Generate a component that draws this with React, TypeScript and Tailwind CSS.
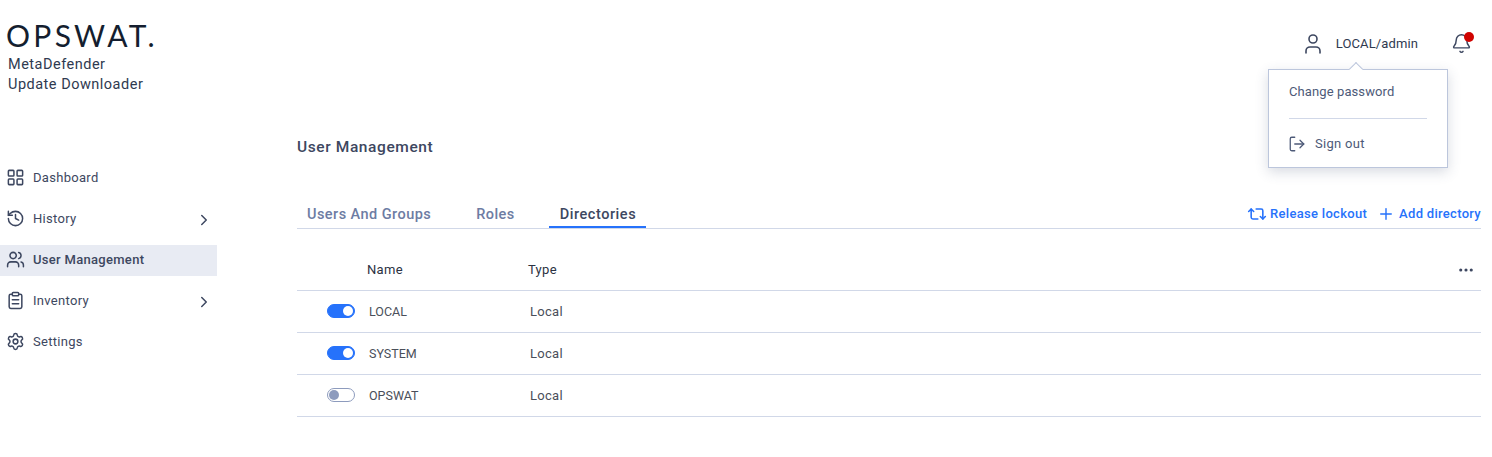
import React from 'react';
import {
  Bell,
  ChevronRight,
  Ellipsis,
  History,
  LayoutGrid,
  LogOut,
  Plus,
  Repeat2,
  Settings,
  User,
  Users,
} from 'lucide-react';

// lucide's ClipboardList has bullet dots, the picture only has two lines
const ClipboardLines = ({ size, strokeWidth, className }: { size: number; strokeWidth: number; className?: string }) => (
  <svg
    width={size}
    height={size}
    viewBox="0 0 24 24"
    fill="none"
    stroke="currentColor"
    strokeWidth={strokeWidth}
    strokeLinecap="round"
    strokeLinejoin="round"
    className={className}
  >
    <rect x="8" y="2" width="8" height="4" rx="1" />
    <path d="M16 4h2a2 2 0 0 1 2 2v14a2 2 0 0 1-2 2H6a2 2 0 0 1-2-2V6a2 2 0 0 1 2-2h2" />
    <path d="M8 11h8" />
    <path d="M8 16h8" />
  </svg>
);

const navItems = [
  { label: 'Dashboard', icon: LayoutGrid },
  { label: 'History', icon: History, more: true },
  { label: 'User Management', icon: Users, active: true },
  { label: 'Inventory', icon: ClipboardLines, more: true },
  { label: 'Settings', icon: Settings },
];

const directories = [
  { name: 'LOCAL', type: 'Local', on: true },
  { name: 'SYSTEM', type: 'Local', on: true },
  { name: 'OPSWAT', type: 'Local', on: false },
];

const Toggle = ({ on }: { on: boolean }) => (
  <div
    className={`flex h-[14px] w-[28px] items-center rounded-full border ${
      on ? 'justify-end border-[#2672fb] bg-[#2672fb] pr-[1px]' : 'justify-start border-[#8d9bbd] bg-white pl-[1px]'
    }`}
  >
    <div className={`h-[10px] w-[10px] rounded-full ${on ? 'bg-white' : 'bg-[#8d9bbd]'}`} />
  </div>
);

export default function App() {
  return (
    <div className="relative flex h-[457px] w-[1492px] overflow-hidden bg-white font-['Roboto',sans-serif] text-[13px] tracking-[0.3px] text-[#3d4760]">
      <aside className="w-[217px] shrink-0">
        <div className="pl-[6px] pt-[16px] font-['Lato',sans-serif] text-[30px] font-normal leading-[38px] tracking-[3.3px] text-[#141e2f]">
          OPSWAT.
        </div>
        <div className="pl-[8px] pt-[1px] text-[14.5px] leading-[20px] tracking-[0.5px] text-[#2f3a50]">
          <div>MetaDefender</div>
          <div>Update Downloader</div>
        </div>
        <nav className="mt-[68px] flex flex-col gap-[10px]">
          {navItems.map(item => {
            const Icon = item.icon;
            return (
              <div
                key={item.label}
                className={`flex h-[31px] items-center pb-[2px] pl-[6px] pr-[4px] ${item.active ? 'bg-[#e8ebf3]' : ''}`}
              >
                <Icon size={19} strokeWidth={1.9} className="text-[#3d4760]" />
                <span className={`ml-[8px] flex-1 ${item.active ? 'font-medium' : ''}`}>{item.label}</span>
                {item.more && <ChevronRight size={18} strokeWidth={2} className="mt-[2px] text-[#3d4760]" />}
              </div>
            );
          })}
        </nav>
      </aside>

      <main className="flex-1 pl-[80px] pr-[11px]">
        <div className="flex h-[87px] items-start justify-end pr-[9px] pt-[32px]">
          <User size={24} strokeWidth={1.6} className="text-[#3d4760]" />
          <span className="ml-[11px] mt-[2px] tracking-[0.12px] text-[#2f3a50]">LOCAL/admin</span>
          <div className="relative ml-[33px] mt-[1px]">
            <Bell size={21} strokeWidth={1.7} className="text-[#3d4760]" />
            <div className="absolute right-[-2px] top-[-1px] h-[10px] w-[10px] rounded-full bg-[#d00300]" />
          </div>
        </div>

        <h1 className="mt-[50px] text-[15.5px] font-medium leading-[20px] tracking-[0.6px] text-[#3d4760]">
          User Management
        </h1>

        <div className="mt-[39px] flex h-[33px] items-stretch justify-between border-b border-[#d1d8e8]">
          <div className="flex text-[14.5px] font-medium tracking-[0.45px] text-[#6d7ca3]">
            <div className="flex items-center px-[10px] pt-[6px]">Users And Groups</div>
            <div className="ml-[25px] flex items-center px-[10px] pt-[6px]">Roles</div>
            <div className="ml-[24px] flex items-center border-b-2 border-[#2672fb] pl-[11px] pr-[10px] pt-[8px] tracking-[0.55px] text-[#3d4760]">
              Directories
            </div>
          </div>
          <div className="flex items-center pt-[4px] text-[13px] font-medium tracking-[0.3px] text-[#2672fb]">
            <Repeat2 size={20} strokeWidth={1.9} />
            <span className="ml-[3px]">Release lockout</span>
            <Plus size={18} strokeWidth={1.9} className="ml-[10px]" />
            <span className="ml-[4px]">Add directory</span>
          </div>
        </div>

        <div className="flex h-[62px] items-center border-b border-[#d1d8e8] pt-[21px] text-[#2b3242]">
          <div className="w-[70px]" />
          <div className="w-[161px]">Name</div>
          <div className="flex-1">Type</div>
          <Ellipsis size={18} strokeWidth={2.2} className="mr-[6px] text-[#3d4760]" />
        </div>

        {directories.map(dir => (
          <div key={dir.name} className="flex h-[42px] items-center border-b border-[#d1d8e8] text-[#4a4f5a]">
            <div className="flex w-[72px] pb-[2px] pl-[30px]">
              <Toggle on={dir.on} />
            </div>
            <div className="w-[161px] pt-[1px] text-[12.5px] tracking-[0px]">{dir.name}</div>
            <div>{dir.type}</div>
          </div>
        ))}
      </main>

      <div className="absolute left-[1268px] top-[69px] h-[99px] w-[180px] border border-[#bcc6dc] bg-white shadow-[0_4px_12px_rgba(60,75,110,0.2)]">
        <div className="absolute left-[82px] top-[-6px] h-[10px] w-[10px] rotate-45 border-l border-t border-[#bcc6dc] bg-white" />
        <div className="px-[20px] pt-[13px] leading-[18px] tracking-[0.1px] text-[#4d5a78]">Change password</div>
        <div className="mx-[20px] mt-[17px] border-t border-[#d1d8e8]" />
        <div className="flex items-center pl-[19px] pt-[16px] leading-[18px] text-[#4d5a78]">
          <LogOut size={18} strokeWidth={1.7} />
          <span className="ml-[9px]">Sign out</span>
        </div>
      </div>
    </div>
  );
}
